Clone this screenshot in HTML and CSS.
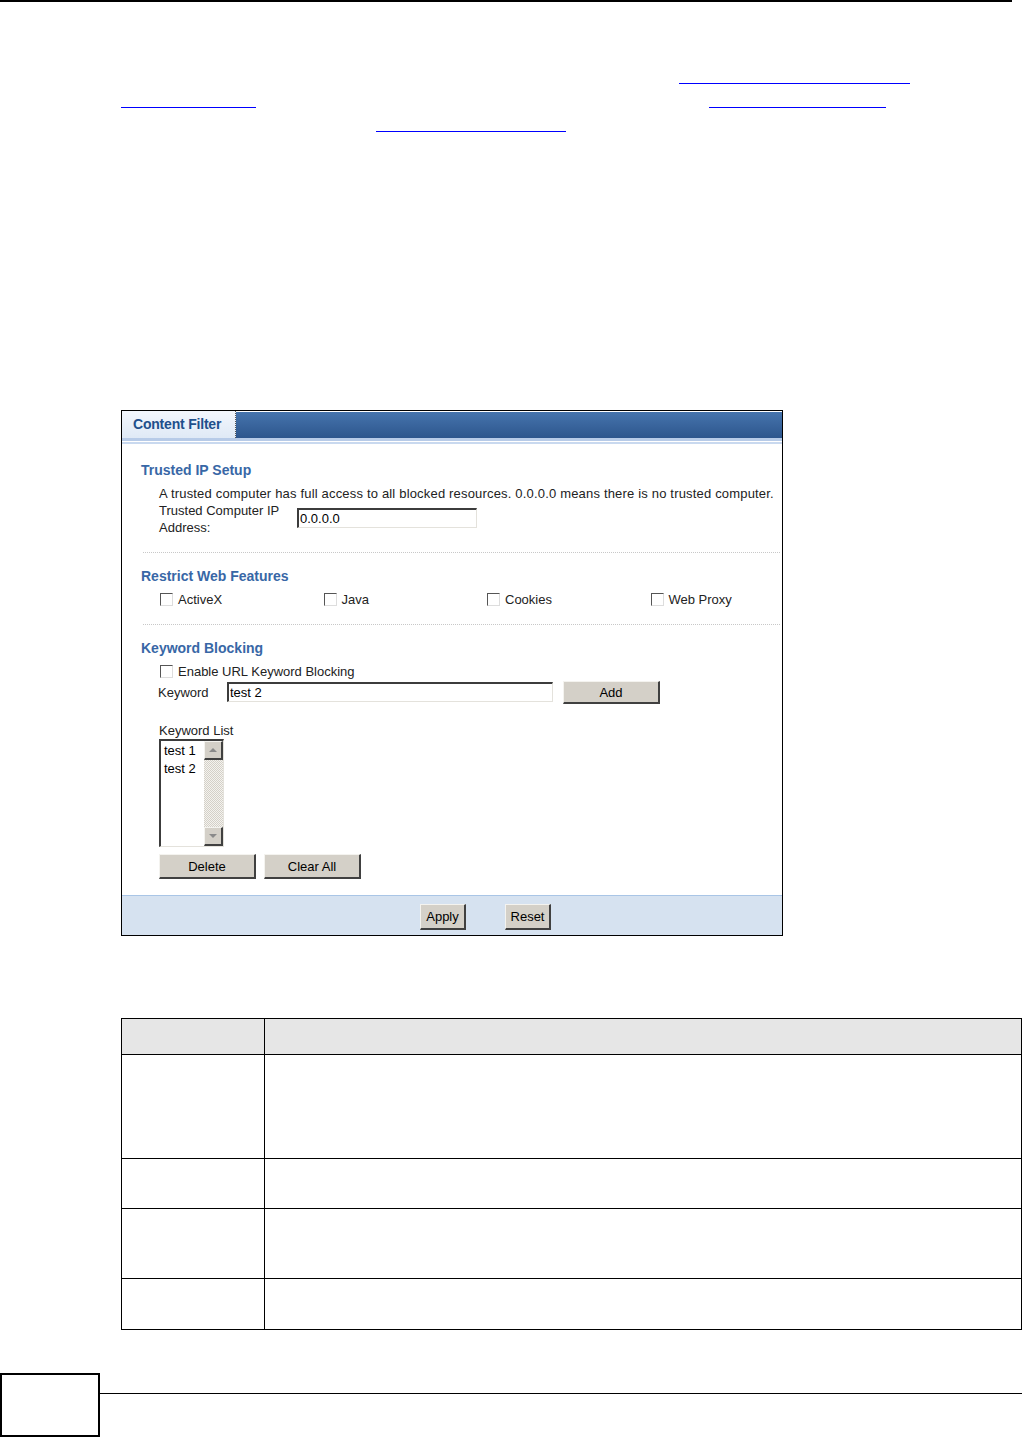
FILE: index.html
```html
<!DOCTYPE html>
<html lang="en">
<head>
    <meta charset="UTF-8">
    <meta name="viewport" content="width=device-width, initial-scale=1.0">
    <title>Content Filter</title>
    <link rel="stylesheet" href="styles.css">
</head>
<body>
    <div class="top-rule"></div>

    <!-- cross reference links of the intro text -->
    <div class="intro">
        <div class="intro-line"><span class="link link-a"></span></div>
        <div class="intro-line"><span class="link link-b"></span><span class="link link-c"></span></div>
        <div class="intro-line"><span class="link link-d"></span></div>
    </div>

    <!-- screen capture of the Content Filter page -->
    <div class="panel">
        <div class="tabbar">
            <div class="tab">Content Filter</div>
            <div class="tab-fill"></div>
        </div>
        <div class="tab-rule"></div>

        <div class="panel-body">
            <h2 class="sec-title">Trusted IP Setup</h2>
            <div class="indent">
                <p class="note">A trusted computer has full access to all blocked resources. 0.0.0.0 means there is no trusted computer.</p>
                <div class="ip-row">
                    <label class="ip-label">Trusted Computer IP<br>Address:</label>
                    <input class="field ip-field" type="text" value="0.0.0.0">
                </div>
            </div>

            <div class="divider"></div>

            <h2 class="sec-title">Restrict Web Features</h2>
            <div class="indent features">
                <label class="check"><input type="checkbox">ActiveX</label>
                <label class="check"><input type="checkbox">Java</label>
                <label class="check"><input type="checkbox">Cookies</label>
                <label class="check"><input type="checkbox">Web Proxy</label>
            </div>

            <div class="divider"></div>

            <h2 class="sec-title">Keyword Blocking</h2>
            <div class="indent">
                <label class="check enable-row"><input type="checkbox">Enable URL Keyword Blocking</label>
                <div class="keyword-row">
                    <span class="kw-label">Keyword</span>
                    <input class="field kw-field" type="text" value="test 2">
                    <button class="btn btn-add">Add</button>
                </div>
                <div class="list-title">Keyword List</div>
                <div class="listbox">
                    <div class="list-items">
                        <div>test 1</div>
                        <div>test 2</div>
                    </div>
                    <div class="scrollbar">
                        <div class="arrow arrow-up"></div>
                        <div class="track"></div>
                        <div class="arrow arrow-down"></div>
                    </div>
                </div>
                <div class="list-buttons">
                    <button class="btn btn-wide">Delete</button>
                    <button class="btn btn-wide">Clear All</button>
                </div>
            </div>
        </div>

        <div class="panel-foot">
            <button class="btn btn-small">Apply</button>
            <button class="btn btn-small">Reset</button>
        </div>
    </div>

    <!-- field description table -->
    <table class="desc-table">
        <tr class="row-head"><th class="col-label"></th><th></th></tr>
        <tr class="row-1"><td></td><td></td></tr>
        <tr class="row-2"><td></td><td></td></tr>
        <tr class="row-3"><td></td><td></td></tr>
        <tr class="row-4"><td></td><td></td></tr>
    </table>

    <div class="page-foot">
        <div class="page-box"></div>
        <div class="foot-rule"></div>
    </div>
</body>
</html>
```

FILE: styles.css
```css
/* Page */
body {
    margin: 0;
    font-family: "Liberation Sans", Arial, sans-serif;
    background-color: #fff;
    color: #000;
    overflow: hidden;
}

.top-rule {
    width: 1012px;
    height: 2px;
    background-color: #000;
}

/* Intro links */
.intro {
    margin-top: 58px;
}

.intro-line {
    display: flex;
    align-items: flex-end;
    height: 24px;
}

.link {
    height: 0;
    border-bottom: 1px solid #0000ff;
}

.link-a { margin-left: 679px; width: 231px; }
.link-b { margin-left: 121px; width: 135px; }
.link-c { margin-left: 453px; width: 177px; }
.link-d { margin-left: 376px; width: 190px; }

/* Screen capture panel */
.panel {
    margin: 278px 0 0 121px;
    width: 660px;
    border: 1px solid #000;
    font-size: 13px;
    color: #222;
}

.tabbar {
    display: flex;
    height: 27px;
}

.tab {
    width: 102px;
    padding-left: 11px;
    line-height: 27px;
    font-size: 14px;
    font-weight: bold;
    color: #1f4f8c;
    background: linear-gradient(#f3f7fd, #dfe9f6);
    border-right: 1px dotted #555;
    letter-spacing: -0.2px;
}

.tab-fill {
    flex: 1;
    margin-top: 1px;
    background: linear-gradient(#4674ad, #2d568d);
}

.tab-rule {
    height: 6px;
    background: linear-gradient(#b7cbe8 0 3px, #fff 3px 4px, #c9d9ef 4px 6px);
}

.panel-body {
    padding: 18px 2px 16px 19px;
}

.sec-title {
    margin: 0;
    font-size: 14px;
    line-height: 16px;
    font-weight: bold;
    color: #3867a6;
}

.indent {
    padding-left: 18px;
}

.note {
    margin: 7px 0 0;
    line-height: 17px;
    letter-spacing: 0.18px;
    white-space: nowrap;
}

.ip-row {
    display: flex;
    align-items: flex-start;
}

.ip-label {
    width: 138px;
    line-height: 17px;
}

.divider {
    margin: 16px 0 15px 2px;
    border-top: 1px dotted #c8c8c8;
}

/* Inset text fields */
.field {
    box-sizing: border-box;
    height: 20px;
    margin: 0;
    padding: 0 0 0 1px;
    font-family: inherit;
    font-size: 13px;
    color: #000;
    background-color: #fff;
    border-style: solid;
    border-width: 2px 1px 1px 2px;
    border-color: #3c3c3c #e4e2dc #e4e2dc #3c3c3c;
    outline: none;
}

.ip-field {
    width: 180px;
    margin-top: 6px;
}

/* Checkboxes */
.features {
    display: grid;
    grid-template-columns: repeat(4, 163.5px);
    margin-top: 7px;
}

.check {
    display: flex;
    align-items: center;
    line-height: 17px;
}

.check input {
    appearance: none;
    box-sizing: border-box;
    width: 13px;
    height: 13px;
    margin: 0 5px 0 1px;
    background-color: #fff;
    border-style: solid;
    border-width: 1px;
    border-color: #555 #ddd #ddd #555;
}

.enable-row {
    margin-top: 7px;
}

/* Keyword row */
.keyword-row {
    display: flex;
    align-items: flex-start;
    margin-top: 1px;
    height: 23px;
}

.kw-label {
    width: 69px;
    margin-left: -1px;
    line-height: 23px;
}

.kw-field {
    width: 326px;
    margin-top: 1px;
}

.btn {
    box-sizing: border-box;
    margin: 0;
    padding: 0;
    font-family: inherit;
    font-size: 13px;
    color: #000;
    background-color: #d4d0c8;
    border-style: solid;
    border-width: 1px 2px 2px 1px;
    border-color: #f4f3ef #404040 #404040 #f4f3ef;
}

.btn-add {
    width: 97px;
    height: 23px;
    margin-left: 10px;
}

.list-title {
    margin-top: 18px;
    line-height: 17px;
}

/* Keyword list box */
.listbox {
    box-sizing: border-box;
    display: flex;
    width: 65px;
    height: 108px;
    border-style: solid;
    border-width: 2px 1px 1px 2px;
    border-color: #3c3c3c #e4e2dc #e4e2dc #3c3c3c;
    background-color: #fff;
}

.list-items {
    flex: 1;
    padding: 1px 0 0 3px;
    line-height: 18px;
    color: #000;
}

.scrollbar {
    display: flex;
    flex-direction: column;
    width: 19px;
}

.arrow {
    box-sizing: border-box;
    height: 19px;
    display: flex;
    align-items: center;
    justify-content: center;
    background-color: #d4d0c8;
    border-style: solid;
    border-width: 1px 2px 2px 1px;
    border-color: #f4f3ef #404040 #404040 #f4f3ef;
}

.arrow::after {
    content: "";
    border-left: 4px solid transparent;
    border-right: 4px solid transparent;
}

.arrow-up::after {
    border-bottom: 4px solid #8a8a8a;
}

.arrow-down::after {
    border-top: 4px solid #8a8a8a;
}

.track {
    flex: 1;
    background: repeating-conic-gradient(#f4f3ef 0 25%, #d4d0c8 0 50%) 0 0 / 2px 2px;
}

.list-buttons {
    display: flex;
    gap: 8px;
    margin-top: 7px;
}

.btn-wide {
    width: 97px;
    height: 25px;
}

/* Panel footer */
.panel-foot {
    display: flex;
    gap: 39px;
    height: 40px;
    padding: 8px 0 0 298px;
    box-sizing: border-box;
    border-top: 1px solid #a9c5e6;
    background-color: #d6e2f0;
}

.btn-small {
    width: 46px;
    height: 26px;
}

/* Description table */
.desc-table {
    margin: 82px 0 0 121px;
    width: 901px;
    border-collapse: collapse;
    border: 1px solid #000;
}

.desc-table th,
.desc-table td {
    padding: 0;
    border: 1px solid #000;
}

.col-label {
    width: 142px;
}

.row-head { height: 36px; background-color: #e6e6e6; }
.row-1 { height: 104px; }
.row-2 { height: 50px; }
.row-3 { height: 70px; }
.row-4 { height: 51px; }

/* Page footer */
.page-foot {
    display: flex;
    align-items: flex-start;
    margin-top: 43px;
}

.page-box {
    box-sizing: border-box;
    width: 100px;
    height: 64px;
    border: 2px solid #000;
}

.foot-rule {
    flex: 1;
    height: 1px;
    margin-top: 20px;
    background-color: #000;
}
```
